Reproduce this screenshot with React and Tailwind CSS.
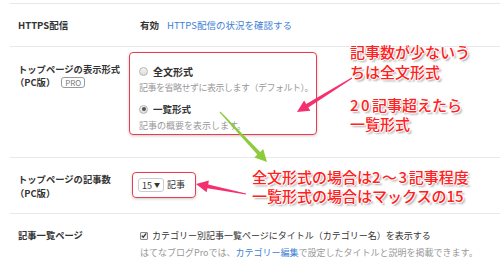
const jp = "font-['Noto_Sans_CJK_JP','Noto_Sans',sans-serif]";

function arrowPoints(x1, y1, x2, y2, head = 12, half = 6, tailW = 0.6, neckW = 2) {
  const dx = x2 - x1;
  const dy = y2 - y1;
  const len = Math.hypot(dx, dy);
  const ux = dx / len;
  const uy = dy / len;
  const nx = -uy;
  const ny = ux;
  const bx = x2 - ux * head;
  const by = y2 - uy * head;
  const pts = [
    [x1 + nx * tailW, y1 + ny * tailW],
    [bx + nx * neckW, by + ny * neckW],
    [bx + nx * half, by + ny * half],
    [x2, y2],
    [bx - nx * half, by - ny * half],
    [bx - nx * neckW, by - ny * neckW],
    [x1 - nx * tailW, y1 - ny * tailW],
  ];
  return pts.map(p => p.map(v => v.toFixed(1)).join(',')).join(' ');
}

function Radio({ checked }) {
  return (
    <span className="w-[9px] h-[9px] rounded-full border border-[#b5b5b5] bg-gradient-to-b from-[#f4f4f4] to-[#dcdcdc] flex items-center justify-center shrink-0">
      {checked && <span className="w-[4px] h-[4px] rounded-full bg-[#555]" />}
    </span>
  );
}

function Note({ children, className }) {
  return (
    <div
      className={`absolute ${jp} text-[15px] font-medium text-[#ff2121] whitespace-nowrap [text-shadow:1px_0_0_#fff,-1px_0_0_#fff,0_1px_0_#fff,0_-1px_0_#fff,2px_2px_2px_rgba(0,0,0,0.35)] ${className}`}
    >
      {children}
    </div>
  );
}

export default function App() {
  return (
    <div className={`relative w-[500px] h-[271px] overflow-hidden bg-white ${jp} text-[#333]`}>
      <div className="pt-[3px] pl-[10px]">
        {/* HTTPS */}
        <div className="flex items-center h-[43px] border-t border-[#e8e8e8]">
          <div className="w-[120px] pl-2 text-[9.5px] font-bold">HTTPS配信</div>
          <div className="flex items-center pl-[10px] text-[9.5px]">
            <span className="font-bold">有効</span>
            <span className="ml-[8px] text-[#3e7fd5]">HTTPS配信の状況を確認する</span>
          </div>
        </div>

        {/* top page display format */}
        <div className="flex h-[111px] border-t border-[#e8e8e8]">
          <div className="w-[119px] pl-2 pt-[16px] text-[9.3px] font-bold leading-[13px]">
            <div>トップページの表示形式</div>
            <div className="flex items-center">
              <span className="-ml-[3px]">（PC版）</span>
              <span className="ml-[6px] px-[3px] border border-[#9a9a9a] rounded-[3px] text-[8px] leading-[9px] font-normal text-[#777]">PRO</span>
            </div>
          </div>
          <div className="pt-[5px]">
            <div className="w-[188px] h-[83px] border-[1.5px] border-[#ee3a4e] rounded-[4px] shadow-[0_1px_3px_rgba(0,0,0,0.2)] pl-[9px] pt-[11px]">
              <div className="flex items-center gap-[5px] h-[14px]">
                <Radio />
                <span className="text-[10px] font-bold">全文形式</span>
              </div>
              <div className="mt-[3px] text-[9px] text-[#999] leading-[13px] tracking-[-0.5px] whitespace-nowrap">記事を省略せずに表示します（デフォルト）。</div>
              <div className="mt-[8px] flex items-center gap-[5px] h-[14px]">
                <Radio checked />
                <span className="text-[9.5px] font-bold">一覧形式</span>
              </div>
              <div className="mt-[3px] text-[9px] text-[#999] leading-[13px] whitespace-nowrap">記事の概要を表示します。</div>
            </div>
          </div>
        </div>

        {/* number of articles */}
        <div className="flex h-[56px] border-t border-[#e8e8e8]">
          <div className="w-[122px] pl-2 pt-[14px] text-[9.3px] font-bold leading-[14px]">
            <div>トップページの記事数</div>
            <div className="-ml-[3px]">（PC版）</div>
          </div>
          <div className="pt-[14px]">
            <div className="w-[64px] h-[26px] border-[1.5px] border-[#ee3a4e] rounded-[4px] shadow-[0_1px_3px_rgba(0,0,0,0.2)] pl-[5px] flex items-center">
              <div className="w-[26px] h-[14px] border border-[#ccc] rounded-[3px] flex items-center justify-between px-[3px] text-[9px] leading-none">
                <span>15</span>
                <span className="text-[6px]">▼</span>
              </div>
              <span className="ml-[3px] text-[9px]">記事</span>
            </div>
          </div>
        </div>

        {/* article list page */}
        <div className="flex border-t border-[#e8e8e8] pt-[15px]">
          <div className="w-[120px] pl-2 text-[9.3px] font-bold leading-[13px]">記事一覧ページ</div>
          <div className="pl-[10px]">
            <div className="flex items-center gap-[4px] h-[13px]">
              <span className="w-[8px] h-[8px] border border-[#888] rounded-[1px] bg-[#f2f2f2] flex items-center justify-center">
                <svg width="7" height="7" viewBox="0 0 8 8"><path d="M1 4.2 L3 6.3 L7 1.3" fill="none" stroke="#333" strokeWidth="1.6" /></svg>
              </span>
              <span className="text-[9px]">カテゴリー別記事一覧ページにタイトル（カテゴリー名）を表示する</span>
            </div>
            <div className="mt-[4px] text-[9px] text-[#999] leading-[13px]">
              はてなブログProでは、<span className="text-[#3e7fd5]">カテゴリー編集</span>で設定したタイトルと説明を掲載できます。
            </div>
          </div>
        </div>
      </div>

      {/* arrows */}
      <svg className="absolute inset-0 pointer-events-none" width="500" height="271" viewBox="0 0 500 271">
        <polygon points={arrowPoints(352, 78, 297, 112)} fill="#f5306f" />
        <polygon points={arrowPoints(220, 112, 267, 162)} fill="#8ccc3c" />
        <polygon points={arrowPoints(246, 194, 196, 184)} fill="#f5306f" />
      </svg>

      {/* annotations */}
      <Note className="left-[350px] top-[42px] leading-[20px]">
        <div>記事数が少ないう</div>
        <div>ちは全文形式</div>
      </Note>
      <Note className="left-[350px] top-[95px] leading-[19px]">
        <div><span className="tracking-[2.5px]">20</span>記事超えたら</div>
        <div>一覧形式</div>
      </Note>
      <Note className="left-[252px] top-[167px] leading-[19px]">
        <div>全文形式の場合は<span className="tracking-[1.5px]">2～3</span>記事程度</div>
        <div>一覧形式の場合はマックスの15</div>
      </Note>
    </div>
  );
}
